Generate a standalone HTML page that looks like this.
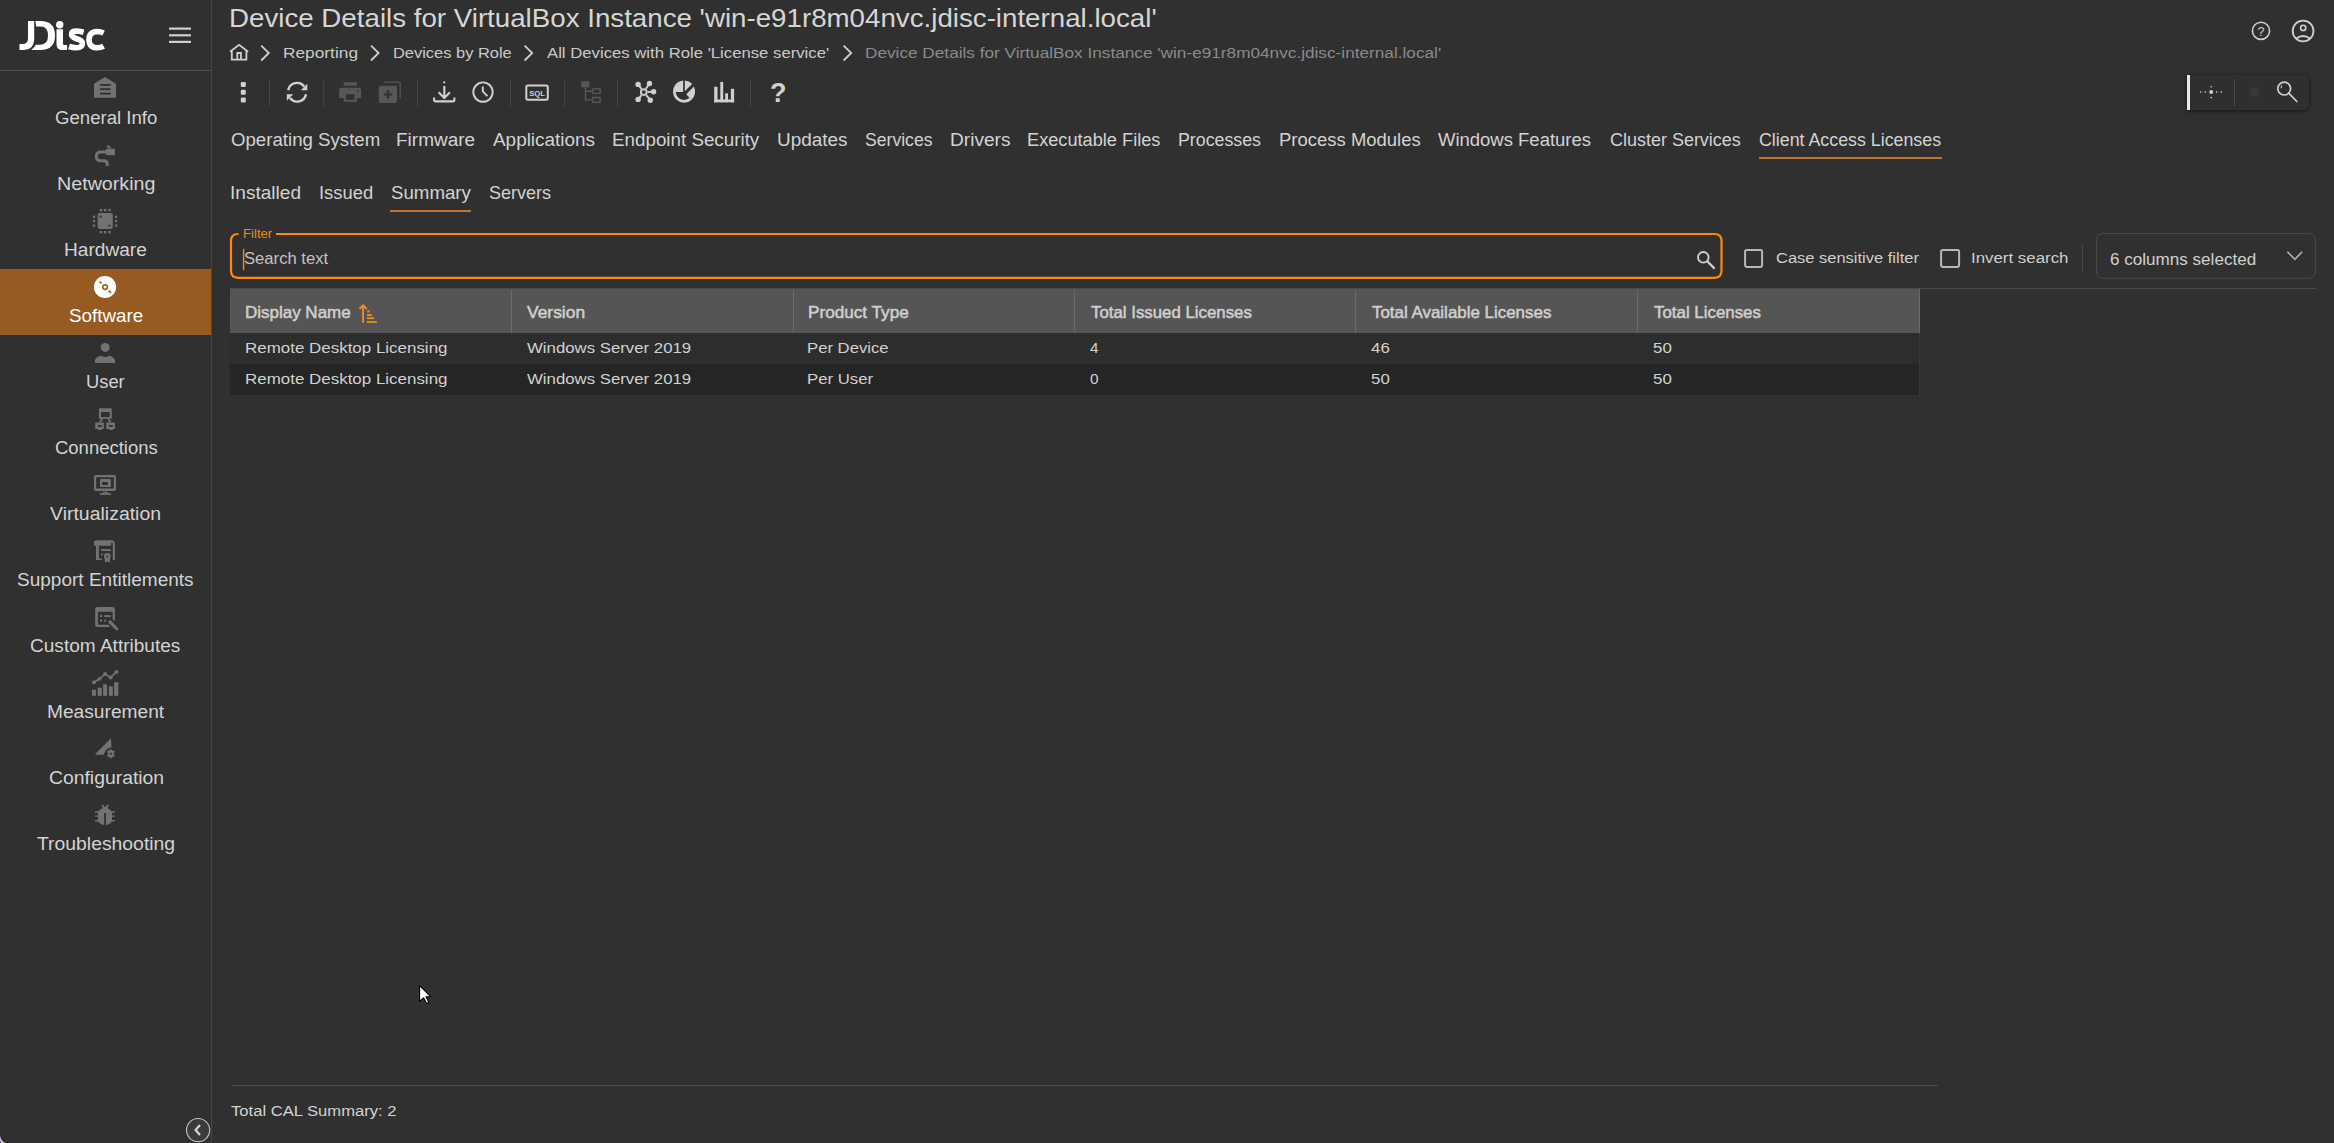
<!DOCTYPE html>
<html><head><meta charset="utf-8">
<style>
*{margin:0;padding:0;box-sizing:border-box}
html,body{width:2334px;height:1143px;overflow:hidden;background:#303030;font-family:"Liberation Sans",sans-serif}
.t{position:absolute;white-space:nowrap}
.b{position:absolute}
svg{position:absolute;overflow:visible}
</style></head><body>
<!-- sidebar -->
<div class="b" style="left:211px;top:0;width:1px;height:1143px;background:#464646"></div>
<div class="b" style="left:0;top:70px;width:211px;height:1px;background:#4e4e4e"></div>
<div class="b" style="left:0;top:269px;width:211px;height:66px;background:#975a21"></div>
<!-- logo + hamburger -->
<svg style="left:0;top:0" width="211" height="70" viewBox="0 0 211 70">
 <g fill="#ffffff">
  <path d="M28 21 H34.2 V38.5 Q34.2 50 22.5 50 H19.5 V44 H22 Q28 44 28 38.5 Z"/>
  <path d="M35.4 21 H40.5 Q55 21 55 35.5 Q55 50 40.5 50 H31.2 Q34.6 47.5 35.8 44.7 H40.5 Q48 44.7 48 35.5 Q48 26.4 40.5 26.4 H36.2 Z"/>
  <circle cx="59.7" cy="24.7" r="3.7"/>
  <path d="M56.5 29.2 H63 V43.5 Q63 45 64.5 45 H67.1 V50 H62.5 Q56.5 50 56.5 44 Z"/>
 </g>
 <g fill="none" stroke="#ffffff" stroke-width="5.6">
  <path d="M83.6 32.2 Q79 31 75.5 31 Q71.5 31.3 71.6 34.5 Q71.8 37 76 38.5 L79.5 39.8 Q82.6 41.2 82.4 44 Q82 47.6 76.5 47.7 Q72.5 47.7 69 46.5"/>
  <path d="M103.6 33 Q100.5 31.5 97.5 31.5 Q89 31.7 89 39.8 Q89 47.8 97.5 47.8 Q100.8 47.8 103.6 46.3"/>
 </g>
 <g fill="#cfcfcf">
  <rect x="169" y="27.5" width="22" height="2.2"/>
  <rect x="169" y="34.2" width="22" height="2.2"/>
  <rect x="169" y="40.8" width="22" height="2.2"/>
 </g>
</svg>
<!-- sidebar icons -->
<svg style="left:85px;top:0" width="40" height="900" viewBox="0 0 40 900">
 <g fill="#727272">
  <!-- general info y0=72 -->
  <g transform="translate(0,72)">
   <path d="M9.3 11.5 L20 4.9 L30.7 11.5 Q31 12 31 13 V24.3 Q31 25.8 29.5 25.8 H10.5 Q9 25.8 9 24.3 V13 Q9 12 9.3 11.5 Z"/>
   <g fill="#303030"><rect x="15.1" y="12.1" width="10.6" height="1.8"/><rect x="15.1" y="16.3" width="10.6" height="1.8"/><rect x="15.1" y="20.7" width="10.6" height="1.9"/></g>
  </g>
  <!-- networking y0=140 -->
  <g transform="translate(0,140)">
   <rect x="21.1" y="8.7" width="8.8" height="6.4"/>
   <path d="M22.8 5 L26.2 7.6 L24.6 9 L21.5 6.5 Z"/>
   <path d="M22 12 H16 Q11.3 12 11.3 16.4 Q11.3 20.7 16 20.7 H18.5 Q22.3 20.7 22.3 24 V25.9" fill="none" stroke="#727272" stroke-width="3"/>
  </g>
  <!-- hardware y0=205 -->
  <g transform="translate(0,205)">
   <rect x="12.6" y="8.1" width="15.2" height="15.8" rx="2.2"/>
   <g fill="#303030"><circle cx="15.7" cy="11.7" r="1.1"/><circle cx="24.5" cy="20.6" r="1.1"/></g>
   <rect x="14.7" y="3.9" width="2.4" height="2.4"/><rect x="18.9" y="3.9" width="2.4" height="2.4"/><rect x="23.3" y="3.9" width="2.4" height="2.4"/>
   <rect x="14.7" y="26" width="2.4" height="2.4"/><rect x="18.9" y="26" width="2.4" height="2.4"/><rect x="23.3" y="26" width="2.4" height="2.4"/>
   <rect x="7.9" y="10.6" width="2.3" height="2.4"/><rect x="7.9" y="14.9" width="2.3" height="2.4"/><rect x="7.9" y="19.4" width="2.3" height="2.4"/>
   <rect x="29.9" y="10.6" width="2.3" height="2.4"/><rect x="29.9" y="14.9" width="2.3" height="2.4"/><rect x="29.9" y="19.4" width="2.3" height="2.4"/>
  </g>
  <!-- software y0=272 -->
  <g transform="translate(0,272)">
   <circle cx="20" cy="15" r="11.1" fill="#ffffff"/>
   <circle cx="20.1" cy="15.1" r="2.3" fill="none" stroke="#975a21" stroke-width="1.6"/>
   <path d="M14.5 9.5 L16.5 11.3 M23.6 18.6 L26.2 21" stroke="#975a21" stroke-width="1.6"/>
  </g>
  <!-- user y0=338 -->
  <g transform="translate(0,338)">
   <circle cx="20.2" cy="9.4" r="4.5"/>
   <path d="M10 25 V22.5 Q10 19.3 16.3 17.8 Q20 20.3 23.7 17.8 Q30 19.3 30 22.5 V25 Z"/>
  </g>
  <!-- connections y0=404 -->
  <g transform="translate(0,404)">
   <path fill-rule="evenodd" d="M13.9 5.5 Q13.9 4.2 15.2 4.2 H25.5 Q26.8 4.2 26.8 5.5 V14.7 H13.9 Z M16 7.9 V12.9 H24.7 V7.9 Z"/>
   <path fill-rule="evenodd" d="M10.2 18.4 H18.8 V24.9 H10.2 Z M12.9 21 V22.8 H16.8 V21 Z"/>
   <rect x="13.1" y="24.9" width="3.7" height="1.1"/>
   <path fill-rule="evenodd" d="M21.3 18.4 H29.9 V24.9 H21.3 Z M23.9 21 V22.8 H27.8 V21 Z"/>
   <rect x="24.1" y="24.9" width="3.7" height="1.1"/>
   <path d="M17.2 14.5 L14.9 18.6 M23.3 14.5 L25.5 18.6" stroke="#727272" stroke-width="1.9"/>
  </g>
  <!-- virtualization y0=470 -->
  <g transform="translate(0,470)">
   <path fill-rule="evenodd" d="M9 7 Q9 5 11 5 H29 Q31 5 31 7 V19 Q31 20.9 29 20.9 H11 Q9 20.9 9 19 Z M11.2 7.3 V18.6 H28.8 V7.3 Z"/>
   <path fill-rule="evenodd" d="M15 10 Q15 8.9 16.2 8.9 H24.8 Q25.9 8.9 25.9 10 V17.1 H15 Z M17.1 12.1 V15 H22.8 V12.1 Z"/>
   <rect x="18.1" y="21.8" width="4.7" height="1.3"/>
   <rect x="14.8" y="23.1" width="11.1" height="1.8"/>
  </g>
  <!-- support y0=536 -->
  <g transform="translate(0,536)">
   <path d="M8.9 9.7 V6.5 Q8.9 4.2 11.5 4.2 H26 Q29.9 4.2 29.9 8 V23.9 H27.8 V8 Q27.8 6.6 26.2 6.6 V9.7 Z"/>
   <path d="M11 9.7 H13.9 V22.6 H16.8 V23.9 H11 Z"/>
   <rect x="16" y="13.1" width="9.9" height="1.9"/>
   <rect x="16" y="17.6" width="1.8" height="1.8"/>
   <circle cx="22.3" cy="20.4" r="3.3"/>
   <path d="M19.9 22 L19.9 26.8 L22.3 25.6 L24.9 26.8 L24.9 22 Z"/>
   <circle cx="22.3" cy="20.4" r="1" fill="#303030"/>
  </g>
  <!-- custom attributes y0=602 -->
  <g transform="translate(0,602)">
   <path d="M10.2 7.5 Q10.2 5 12.7 5 H27.4 Q29.9 5 29.9 7.5 V18.9 L27.6 17.2 V9.7 H12.9 V22.8 H23.5 L25 24.9 H12.7 Q10.2 24.9 10.2 22.4 Z"/>
   <rect x="15" y="13.1" width="2.1" height="1.9"/><rect x="19.2" y="13.1" width="6.7" height="1.9"/>
   <rect x="15" y="17.6" width="2.1" height="2.1"/><rect x="19.2" y="17.6" width="1.8" height="2.1"/>
   <path d="M25 20 L29.6 24.6" stroke="#727272" stroke-width="3.2" stroke-linecap="round"/>
   <path d="M30.3 25.5 L32 27.2" stroke="#727272" stroke-width="2.6" stroke-linecap="round"/>
  </g>
  <!-- measurement y0=668 -->
  <g transform="translate(0,668)">
   <rect x="7" y="21.8" width="3.9" height="6"/><rect x="12.7" y="19.7" width="4.1" height="8.1"/>
   <rect x="18.1" y="16.3" width="3.9" height="11.5"/><rect x="23.9" y="18.4" width="3.9" height="9.4"/>
   <rect x="29.1" y="14.2" width="4.2" height="13.6"/>
   <path d="M9 14.2 L14.6 10.8 L20.1 6 L25.6 9.4 L31.4 3.9" fill="none" stroke="#727272" stroke-width="1.7"/>
   <circle cx="9" cy="14.2" r="2"/><circle cx="14.6" cy="10.8" r="1.9"/><circle cx="20.1" cy="6" r="2"/><circle cx="25.6" cy="9.4" r="2"/><circle cx="31.4" cy="3.9" r="2"/>
  </g>
  <!-- configuration y0=734 -->
  <g transform="translate(0,734)">
   <path d="M10.2 19.9 L26 4.2 L26.5 13.3 Q20.5 14 18.9 20.8 L11 20.8 Z"/>
   <g transform="translate(25.9,19.7)">
    <path d="M-1 -4.3 H1 L1.4 -2.9 L2.9 -3.5 L3.9 -1.8 L2.8 -0.8 L2.8 0.8 L3.9 1.8 L2.9 3.5 L1.4 2.9 L1 4.3 H-1 L-1.4 2.9 L-2.9 3.5 L-3.9 1.8 L-2.8 0.8 L-2.8 -0.8 L-3.9 -1.8 L-2.9 -3.5 L-1.4 -2.9 Z"/>
    <circle r="1.1" fill="#303030"/>
   </g>
  </g>
  <!-- troubleshooting y0=800 -->
  <g transform="translate(0,800)">
   <path d="M17.3 4.3 L20 7.2 L22.9 4.3 L23.8 5.2 L22.3 8.2 Q25.3 9.3 26.3 11.3 H29.9 V12.7 H27 V15.4 H29.9 V16.8 H27 V20 H29.9 V21.4 H26.8 Q25.5 24.3 21 24.9 V12.9 H19.2 V24.9 Q14.6 24.3 13.3 21.4 H10 V20 H13 V16.8 H10 V15.4 H13 V12.7 H10 V11.3 H13.6 Q14.7 9.3 17.8 8.2 L16.4 5.2 Z"/>
  </g>
 </g>
</svg>

<!-- breadcrumb icons -->
<svg style="left:0;top:0" width="900" height="70" viewBox="0 0 900 70">
 <g fill="none" stroke="#cfcfcf" stroke-width="1.8">
  <path d="M230 51.8 L239.1 44.8 L248.1 51.8 M231.8 50.3 V59.6 H246.4 V50.3 M237.3 59.6 V53 H241 V59.6"/>
  <path d="M261.2 45.6 L268.8 53 L261.2 60.5 M371 45.6 L378.6 53 L371 60.5 M524.6 45.6 L532.2 53 L524.6 60.5 M843.6 45.6 L851.2 53 L843.6 60.5"/>
 </g>
</svg>

<!-- toolbar -->
<svg style="left:0;top:0" width="800" height="120" viewBox="0 0 800 120">
 <g fill="#464646">
  <rect x="269" y="79" width="1" height="27"/><rect x="323.2" y="79" width="1" height="27"/><rect x="417" y="79" width="1" height="27"/>
  <rect x="510" y="79" width="1" height="27"/><rect x="564.2" y="79" width="1" height="27"/><rect x="617" y="79" width="1" height="27"/>
  <rect x="750" y="79" width="1" height="27"/>
 </g>
 <g fill="#d0d0d0">
  <rect x="240.8" y="81.9" width="5" height="5" rx="1.2"/><rect x="240.8" y="89.7" width="5" height="5" rx="1.2"/><rect x="240.8" y="97.5" width="5" height="5" rx="1.2"/>
 </g>
 <!-- refresh -->
 <g fill="none" stroke="#d0d0d0" stroke-width="2.4">
  <path d="M288.2 90.2 A9 9 0 0 1 304.2 86.5"/>
  <path d="M306 94.2 A9 9 0 0 1 290 98"/>
 </g>
 <g fill="#d0d0d0">
  <path d="M307.3 83.7 L307.3 90.3 L300.8 90.3 Z"/>
  <path d="M286.8 100.8 L286.8 94.2 L293.2 94.2 Z"/>
 </g>
 <!-- printer dim -->
 <g fill="#575757">
  <rect x="343.7" y="82.3" width="13.2" height="3.4"/>
  <path d="M339.1 90.2 Q339.1 87.7 341.6 87.7 H358.6 Q361.1 87.7 361.1 90.2 V97.9 H356.9 V101.8 H343.7 V97.9 H339.1 Z"/>
  <rect x="346" y="94.3" width="8.5" height="5.5" fill="#303030"/>
  <circle cx="358" cy="90.8" r="0.9" fill="#303030"/>
 </g>
 <!-- copy add dim -->
 <g fill="#575757">
  <path d="M383.8 81.6 H399.3 Q400.8 81.6 400.8 83.1 V98.9 H399.6 V82.8 H383.8 Z"/>
  <rect x="378.8" y="85.8" width="18.2" height="17.3" rx="2"/>
  <path d="M386.8 90.3 H389.2 V93.4 H392.3 V95.6 H389.2 V98.6 H386.8 V95.6 H383.8 V93.4 H386.8 Z" fill="#303030"/>
 </g>
 <!-- download -->
 <g fill="none" stroke="#d0d0d0" stroke-width="2.1">
  <path d="M444.3 86 V97.5 M438.6 92.3 L444.3 98 L450 92.3"/>
  <path d="M434.1 97.6 V100.3 Q434.1 101.4 435.2 101.4 H453.3 Q454.4 101.4 454.4 100.3 V97.6"/>
 </g>
 <rect x="443.2" y="81.3" width="2.2" height="2.2" rx="1" fill="#d0d0d0"/>
 <!-- clock -->
 <g fill="none" stroke="#d0d0d0" stroke-width="1.9">
  <circle cx="483" cy="92.1" r="9.7"/>
  <path d="M482.8 86.5 V91.4 L487.4 96.2"/>
 </g>
 <!-- SQL -->
 <rect x="526.3" y="85.4" width="21.5" height="14.3" rx="1.6" fill="none" stroke="#d0d0d0" stroke-width="2"/>
 <text x="537" y="95.6" font-family="Liberation Sans" font-weight="700" font-size="7.6" fill="#d0d0d0" text-anchor="middle">SQL</text>
 <!-- tree dim -->
 <g fill="#575757">
  <rect x="581.4" y="81.4" width="8.1" height="6"/>
 </g>
 <g fill="none" stroke="#575757" stroke-width="1.4">
  <path d="M585.5 87.4 V99.9 H592.3 M585.5 91.2 H592.3"/>
  <rect x="592.8" y="88.9" width="7.3" height="4.5"/>
  <rect x="592.8" y="97.5" width="7.3" height="4.8"/>
 </g>
 <!-- hub -->
 <g stroke="#d0d0d0" stroke-width="1.9" fill="none">
  <path d="M643.8 92.1 L638.1 84.4 M643.8 92.1 L649.5 83.5 M643.8 92.1 L653.6 91.7 M643.8 92.1 L638.1 99.4 M643.8 92.1 L650.3 100.2"/>
 </g>
 <circle cx="643.8" cy="92.1" r="3.9" fill="#303030"/>
 <circle cx="643.8" cy="92.1" r="2.9" fill="none" stroke="#d0d0d0" stroke-width="1.9"/>
 <g fill="#d0d0d0">
  <circle cx="638.1" cy="84.4" r="2.7"/><circle cx="649.5" cy="83.5" r="2.7"/><circle cx="653.6" cy="91.7" r="2.7"/><circle cx="638.1" cy="99.4" r="2.7"/><circle cx="650.3" cy="100.2" r="2.7"/>
 </g>
 <!-- pie -->
 <g fill="#d0d0d0">
  <path d="M683.1 92.1 H673.0 A11.1 11.1 0 0 1 683.1 80.45 Z"/>
  <path d="M684.8 91.3 V80.42 A11.1 11.1 0 0 1 692.2 83.9 Z"/>
  <path d="M693.9 86.6 L686.2 94.2 L690.1 98.4 L691.4 99.9 A11.1 11.1 0 0 0 693.9 86.6 Z"/>
  <path d="M673.0 92.1 A11.1 11.1 0 0 0 691.4 99.9 L689.6 97.8 A8.4 8.4 0 0 1 675.7 92.1 Z"/>
 </g>
 <!-- bar chart -->
 <g fill="#d0d0d0">
  <rect x="714.2" y="86.8" width="3.3" height="15.5"/><rect x="720.3" y="81.9" width="2.9" height="20.4"/>
  <rect x="725.2" y="93.3" width="2.8" height="9"/><rect x="730.9" y="88.8" width="3.2" height="13.5"/>
  <rect x="714.2" y="99.5" width="19.9" height="2.8"/>
 </g>
 <!-- question -->
 <text x="778.2" y="102.4" font-family="Liberation Sans" font-weight="700" font-size="27" fill="#d0d0d0" text-anchor="middle">?</text>
</svg>

<!-- right top icons -->
<svg style="left:2200px;top:0" width="134" height="130" viewBox="2200 0 134 130">
 <g fill="none" stroke="#d0d0d0">
  <circle cx="2261" cy="30.8" r="8.6" stroke-width="1.6"/>
  <circle cx="2303.1" cy="31" r="10.4" stroke-width="1.8"/>
  <circle cx="2303.2" cy="27.9" r="2.6" stroke-width="1.6"/>
  <path d="M2296.3 38.4 Q2303 33.6 2310 38.4" stroke-width="1.8"/>
 </g>
 <text x="2261.1" y="35.6" font-family="Liberation Sans" font-size="12.5" fill="#d0d0d0" text-anchor="middle">?</text>
</svg>
<!-- floating toolbar -->
<div class="b" style="left:2187px;top:74.5px;width:122px;height:35.5px;background:#2f2f2f;border-radius:0 6px 6px 0;box-shadow:0 1px 4px rgba(0,0,0,0.55)"></div>
<div class="b" style="left:2187px;top:75px;width:3px;height:35px;background:#e8e8e8"></div>
<div class="b" style="left:2234px;top:79px;width:1px;height:27px;background:#4a4a4a"></div>
<svg style="left:2190px;top:70px" width="120" height="45" viewBox="2190 70 120 45">
 <g fill="#cfcfcf">
  <circle cx="2211.2" cy="92.1" r="2"/>
  <circle cx="2200.8" cy="92.1" r="0.8"/><circle cx="2205.3" cy="92.1" r="0.8"/><circle cx="2216.7" cy="92.1" r="0.8"/><circle cx="2221.3" cy="92.1" r="0.8"/>
  <circle cx="2211.2" cy="86.7" r="0.8"/><circle cx="2211.2" cy="97.6" r="0.8"/>
 </g>
 <circle cx="2254" cy="92" r="5" fill="#383838"/>
 <g fill="none" stroke="#d0d0d0" stroke-width="1.7">
  <circle cx="2284.2" cy="88.6" r="6.4"/>
  <path d="M2288.8 93.2 L2296.8 101.5" stroke-linecap="round"/>
  <path d="M2282 85.6 Q2281 86.8 2281.2 88.3" stroke-width="1.1"/>
 </g>
</svg>

<!-- filter box -->
<svg style="left:0;top:0" width="2334" height="300" viewBox="0 0 2334 300">
 <path d="M238.5 234 H238 Q231 234 231 241 V270.5 Q231 277.8 238 277.8 H1714.5 Q1721.5 277.8 1721.5 270.5 V241 Q1721.5 234 1714.5 234 H276" fill="none" stroke="#ff8a0a" stroke-width="2.2"/>
 <rect x="242.9" y="248.8" width="1.4" height="21.3" fill="#ff8a0a"/>
 <g fill="none" stroke="#d0d0d0" stroke-width="1.8">
  <circle cx="1703.3" cy="257.3" r="5.3"/>
  <path d="M1707.2 261.2 L1714.6 268.6" stroke-width="2.2"/>
 </g>
 <!-- checkboxes -->
 <rect x="1745.1" y="250" width="17" height="16.9" rx="1.8" fill="none" stroke="#b8b8b8" stroke-width="2"/>
 <rect x="1941.1" y="250" width="18" height="16.9" rx="1.8" fill="none" stroke="#b8b8b8" stroke-width="2"/>
 <rect x="2082" y="245" width="1" height="27" fill="#474747"/>
 <!-- dropdown -->
 <rect x="2096.6" y="233.6" width="218.7" height="44.7" rx="6" fill="none" stroke="#4b4b4b" stroke-width="1"/>
 <path d="M2287.4 251.8 L2294.8 259.3 L2302.2 251.8" fill="none" stroke="#b0b0b0" stroke-width="1.6"/>
 <rect x="230" y="288" width="2086" height="1" fill="#4a4a4a"/>
</svg>

<!-- table -->
<div class="b" style="left:230px;top:289px;width:1690px;height:44px;background:#555555"></div>
<svg style="left:230px;top:333px" width="1690" height="62" viewBox="0 0 1690 62">
 <defs>
  <pattern id="dA" x="0" y="0" width="4" height="4" patternUnits="userSpaceOnUse"><rect width="4" height="4" fill="#2c2c2c"/><rect x="1" y="1" width="1" height="1" fill="#363636"/><rect x="3" y="3" width="1" height="1" fill="#363636"/></pattern>
  <pattern id="dB" x="0" y="0" width="4" height="4" patternUnits="userSpaceOnUse"><rect width="4" height="4" fill="#242424"/><rect x="1" y="1" width="1" height="1" fill="#2e2e2e"/><rect x="3" y="3" width="1" height="1" fill="#2e2e2e"/></pattern>
 </defs>
 <rect x="0" y="0" width="1690" height="31" fill="url(#dA)"/>
 <rect x="0" y="31" width="1690" height="31" fill="url(#dB)"/>
</svg>
<div class="b" style="left:1919px;top:289px;width:1px;height:44px;background:#6a6a6a"></div>
<div class="b" style="left:1919px;top:333px;width:1px;height:62px;background:#383838"></div>
<div class="b" style="left:511px;top:290px;width:1px;height:43px;background:#6a6a6a"></div>
<div class="b" style="left:793px;top:290px;width:1px;height:43px;background:#6a6a6a"></div>
<div class="b" style="left:1074px;top:290px;width:1px;height:43px;background:#6a6a6a"></div>
<div class="b" style="left:1355px;top:290px;width:1px;height:43px;background:#6a6a6a"></div>
<div class="b" style="left:1637px;top:290px;width:1px;height:43px;background:#6a6a6a"></div>
<svg style="left:355px;top:300px" width="30" height="30" viewBox="355 300 30 30">
 <g fill="#f28a1e">
  <rect x="362.1" y="306" width="1.9" height="16.7"/>
  <rect x="367.3" y="310.3" width="2.3" height="2.2"/>
  <rect x="367.1" y="314.1" width="4.7" height="1.9"/>
  <rect x="367" y="317.3" width="7" height="1.8"/>
  <rect x="367" y="321.1" width="9.8" height="1.8"/>
 </g>
 <path d="M359.4 309 L363.05 305.4 L366.7 309" fill="none" stroke="#f28a1e" stroke-width="2"/>
</svg>

<!-- tab underlines -->
<div class="b" style="left:1759px;top:156.5px;width:183px;height:2px;background:#c0762c"></div>
<div class="b" style="left:390.4px;top:210px;width:80.6px;height:2.3px;background:#c0762c"></div>
<!-- footer -->
<div class="b" style="left:231px;top:1085px;width:1707px;height:1px;background:#4c4c4c"></div>
<svg style="left:180px;top:1110px" width="40" height="33" viewBox="180 1110 40 33">
 <circle cx="198.1" cy="1130.1" r="11.6" fill="#3b3b3b" stroke="#bdbdbd" stroke-width="1.2"/>
 <path d="M200 1125 L195.6 1130 L200 1135" fill="none" stroke="#d6d6d6" stroke-width="2.2"/>
</svg>
<!-- cursor -->
<svg style="left:410px;top:978px" width="30" height="30" viewBox="410 978 30 30">
 <path d="M419.6 985.6 V1001.4 L423.6 997.8 L426.6 1003.4 L428.8 1002.3 L426 996.8 H431 Z" fill="#ffffff" stroke="#000000" stroke-width="1.1" stroke-linejoin="round"/>
</svg>
<svg style="left:0;top:1130px" width="10" height="13" viewBox="0 1130 10 13">
 <path d="M0 1135.6 Q0.8 1141.2 5.2 1143 H0 Z" fill="#cfcfcf"/>
 <rect x="0" y="1141.6" width="1" height="1.4" fill="#2050a0"/>
</svg>
<div class="t" style="left:54.50px;top:109.16px;font-size:18px;line-height:18px;color:#d3d3d3;letter-spacing:0.000px;transform:scaleX(1.0328);transform-origin:0 0">General Info</div>
<div class="t" style="left:56.61px;top:175.16px;font-size:18px;line-height:18px;color:#d3d3d3;letter-spacing:0.000px;transform:scaleX(1.0940);transform-origin:0 0">Networking</div>
<div class="t" style="left:63.74px;top:241.16px;font-size:18px;line-height:18px;color:#d3d3d3;letter-spacing:0.000px;transform:scaleX(1.0608);transform-origin:0 0">Hardware</div>
<div class="t" style="left:68.60px;top:307.16px;font-size:18px;line-height:18px;color:#ffffff;letter-spacing:0.000px;transform:scaleX(1.0433);transform-origin:0 0">Software</div>
<div class="t" style="left:85.78px;top:373.16px;font-size:18px;line-height:18px;color:#d3d3d3;letter-spacing:0.000px;transform:scaleX(1.0187);transform-origin:0 0">User</div>
<div class="t" style="left:54.60px;top:439.16px;font-size:18px;line-height:18px;color:#d3d3d3;letter-spacing:0.000px;transform:scaleX(1.0263);transform-origin:0 0">Connections</div>
<div class="t" style="left:50.40px;top:505.16px;font-size:18px;line-height:18px;color:#d3d3d3;letter-spacing:0.000px;transform:scaleX(1.0814);transform-origin:0 0">Virtualization</div>
<div class="t" style="left:17.40px;top:571.16px;font-size:18px;line-height:18px;color:#d3d3d3;letter-spacing:0.000px;transform:scaleX(1.0569);transform-origin:0 0">Support Entitlements</div>
<div class="t" style="left:29.80px;top:637.16px;font-size:18px;line-height:18px;color:#d3d3d3;letter-spacing:0.000px;transform:scaleX(1.0584);transform-origin:0 0">Custom Attributes</div>
<div class="t" style="left:46.94px;top:703.16px;font-size:18px;line-height:18px;color:#d3d3d3;letter-spacing:0.000px;transform:scaleX(1.0647);transform-origin:0 0">Measurement</div>
<div class="t" style="left:48.80px;top:769.16px;font-size:18px;line-height:18px;color:#d3d3d3;letter-spacing:0.000px;transform:scaleX(1.0749);transform-origin:0 0">Configuration</div>
<div class="t" style="left:37.20px;top:835.16px;font-size:18px;line-height:18px;color:#d3d3d3;letter-spacing:0.000px;transform:scaleX(1.0753);transform-origin:0 0">Troubleshooting</div>
<div class="t" style="left:229.37px;top:4.99px;font-size:26px;line-height:26px;color:#d6d6d6;letter-spacing:0.000px;transform:scaleX(1.0654);transform-origin:0 0">Device Details for VirtualBox Instance &#x27;win-e91r8m04nvc.jdisc-internal.local&#x27;</div>
<div class="t" style="left:282.98px;top:45.18px;font-size:15.5px;line-height:15.5px;color:#cacaca;letter-spacing:0.000px;transform:scaleX(1.1161);transform-origin:0 0">Reporting</div>
<div class="t" style="left:392.74px;top:45.18px;font-size:15.5px;line-height:15.5px;color:#cacaca;letter-spacing:0.000px;transform:scaleX(1.0601);transform-origin:0 0">Devices by Role</div>
<div class="t" style="left:547.00px;top:45.18px;font-size:15.5px;line-height:15.5px;color:#cacaca;letter-spacing:0.000px;transform:scaleX(1.0779);transform-origin:0 0">All Devices with Role &#x27;License service&#x27;</div>
<div class="t" style="left:864.99px;top:45.18px;font-size:15.5px;line-height:15.5px;color:#8a8a8a;letter-spacing:0.000px;transform:scaleX(1.1100);transform-origin:0 0">Device Details for VirtualBox Instance &#x27;win-e91r8m04nvc.jdisc-internal.local&#x27;</div>
<div class="t" style="left:230.50px;top:130.96px;font-size:18px;line-height:18px;color:#d3d3d3;letter-spacing:0.000px;transform:scaleX(1.0359);transform-origin:0 0">Operating System</div>
<div class="t" style="left:396.15px;top:130.96px;font-size:18px;line-height:18px;color:#d3d3d3;letter-spacing:0.000px;transform:scaleX(1.0542);transform-origin:0 0">Firmware</div>
<div class="t" style="left:493.20px;top:130.96px;font-size:18px;line-height:18px;color:#d3d3d3;letter-spacing:0.000px;transform:scaleX(1.0509);transform-origin:0 0">Applications</div>
<div class="t" style="left:612.46px;top:130.96px;font-size:18px;line-height:18px;color:#d3d3d3;letter-spacing:0.000px;transform:scaleX(1.0437);transform-origin:0 0">Endpoint Security</div>
<div class="t" style="left:776.95px;top:130.96px;font-size:18px;line-height:18px;color:#d3d3d3;letter-spacing:0.000px;transform:scaleX(1.0508);transform-origin:0 0">Updates</div>
<div class="t" style="left:865.30px;top:130.96px;font-size:18px;line-height:18px;color:#d3d3d3;letter-spacing:0.000px;transform:scaleX(0.9780);transform-origin:0 0">Services</div>
<div class="t" style="left:949.84px;top:130.96px;font-size:18px;line-height:18px;color:#d3d3d3;letter-spacing:0.000px;transform:scaleX(1.0608);transform-origin:0 0">Drivers</div>
<div class="t" style="left:1026.99px;top:130.96px;font-size:18px;line-height:18px;color:#d3d3d3;letter-spacing:0.000px;transform:scaleX(1.0102);transform-origin:0 0">Executable Files</div>
<div class="t" style="left:1178.01px;top:130.96px;font-size:18px;line-height:18px;color:#d3d3d3;letter-spacing:0.000px;transform:scaleX(0.9876);transform-origin:0 0">Processes</div>
<div class="t" style="left:1278.67px;top:130.96px;font-size:18px;line-height:18px;color:#d3d3d3;letter-spacing:0.000px;transform:scaleX(1.0266);transform-origin:0 0">Process Modules</div>
<div class="t" style="left:1438.00px;top:130.96px;font-size:18px;line-height:18px;color:#d3d3d3;letter-spacing:0.000px;transform:scaleX(1.0265);transform-origin:0 0">Windows Features</div>
<div class="t" style="left:1609.60px;top:130.96px;font-size:18px;line-height:18px;color:#d3d3d3;letter-spacing:0.000px;transform:scaleX(0.9982);transform-origin:0 0">Cluster Services</div>
<div class="t" style="left:1759.00px;top:130.96px;font-size:18px;line-height:18px;color:#d3d3d3;letter-spacing:0.000px;transform:scaleX(0.9888);transform-origin:0 0">Client Access Licenses</div>
<div class="t" style="left:230.20px;top:183.12px;font-size:19px;line-height:19px;color:#d3d3d3;letter-spacing:0.000px;transform:scaleX(1.0029);transform-origin:0 0">Installed</div>
<div class="t" style="left:319.03px;top:183.12px;font-size:19px;line-height:19px;color:#d3d3d3;letter-spacing:0.000px;transform:scaleX(0.9667);transform-origin:0 0">Issued</div>
<div class="t" style="left:390.60px;top:183.12px;font-size:19px;line-height:19px;color:#d3d3d3;letter-spacing:0.000px;transform:scaleX(0.9830);transform-origin:0 0">Summary</div>
<div class="t" style="left:488.60px;top:183.12px;font-size:19px;line-height:19px;color:#d3d3d3;letter-spacing:0.000px;transform:scaleX(0.9483);transform-origin:0 0">Servers</div>
<div class="t" style="left:242.95px;top:228.02px;font-size:12.5px;line-height:12.5px;color:#ea8a1e;letter-spacing:0.000px;transform:scaleX(1.0521);transform-origin:0 0">Filter</div>
<div class="t" style="left:244.20px;top:250.89px;font-size:15.6px;line-height:15.6px;color:#c2c2c2;letter-spacing:0.000px;transform:scaleX(1.0674);transform-origin:0 0">Search text</div>
<div class="t" style="left:1776.00px;top:249.98px;font-size:15.5px;line-height:15.5px;color:#cfcfcf;letter-spacing:0.000px;transform:scaleX(1.0632);transform-origin:0 0">Case sensitive filter</div>
<div class="t" style="left:1971.31px;top:249.88px;font-size:15.5px;line-height:15.5px;color:#cfcfcf;letter-spacing:0.000px;transform:scaleX(1.0878);transform-origin:0 0">Invert search</div>
<div class="t" style="left:2110.20px;top:251.66px;font-size:16px;line-height:16px;color:#d0d0d0;letter-spacing:0.000px;transform:scaleX(1.0672);transform-origin:0 0">6 columns selected</div>
<div class="t" style="left:244.55px;top:304.19px;font-size:16.2px;line-height:16.2px;color:#cfcfcf;letter-spacing:0.000px;transform:scaleX(1.0486);transform-origin:0 0;-webkit-text-stroke:0.5px #cfcfcf">Display Name</div>
<div class="t" style="left:527.27px;top:304.19px;font-size:16.2px;line-height:16.2px;color:#cfcfcf;letter-spacing:0.000px;transform:scaleX(1.0757);transform-origin:0 0;-webkit-text-stroke:0.5px #cfcfcf">Version</div>
<div class="t" style="left:807.87px;top:304.19px;font-size:16.2px;line-height:16.2px;color:#cfcfcf;letter-spacing:0.000px;transform:scaleX(1.0596);transform-origin:0 0;-webkit-text-stroke:0.5px #cfcfcf">Product Type</div>
<div class="t" style="left:1090.60px;top:304.19px;font-size:16.2px;line-height:16.2px;color:#cfcfcf;letter-spacing:0.000px;transform:scaleX(1.0396);transform-origin:0 0;-webkit-text-stroke:0.5px #cfcfcf">Total Issued Licenses</div>
<div class="t" style="left:1372.27px;top:304.19px;font-size:16.2px;line-height:16.2px;color:#cfcfcf;letter-spacing:0.000px;transform:scaleX(1.0454);transform-origin:0 0;-webkit-text-stroke:0.5px #cfcfcf">Total Available Licenses</div>
<div class="t" style="left:1653.93px;top:304.19px;font-size:16.2px;line-height:16.2px;color:#cfcfcf;letter-spacing:0.000px;transform:scaleX(1.0421);transform-origin:0 0;-webkit-text-stroke:0.5px #cfcfcf">Total Licenses</div>
<div class="t" style="left:244.69px;top:340.15px;font-size:15.3px;line-height:15.3px;color:#d2d2d2;letter-spacing:0.000px;transform:scaleX(1.1076);transform-origin:0 0">Remote Desktop Licensing</div>
<div class="t" style="left:526.60px;top:340.15px;font-size:15.3px;line-height:15.3px;color:#d2d2d2;letter-spacing:0.000px;transform:scaleX(1.0970);transform-origin:0 0">Windows Server 2019</div>
<div class="t" style="left:807.11px;top:340.15px;font-size:15.3px;line-height:15.3px;color:#d2d2d2;letter-spacing:0.000px;transform:scaleX(1.0913);transform-origin:0 0">Per Device</div>
<div class="t" style="left:1089.90px;top:340.15px;font-size:15.3px;line-height:15.3px;color:#d2d2d2;letter-spacing:0.000px">4</div>
<div class="t" style="left:1371.20px;top:340.15px;font-size:15.3px;line-height:15.3px;color:#d2d2d2;letter-spacing:0.000px;transform:scaleX(1.1025);transform-origin:0 0">46</div>
<div class="t" style="left:1652.80px;top:340.15px;font-size:15.3px;line-height:15.3px;color:#d2d2d2;letter-spacing:0.000px;transform:scaleX(1.1025);transform-origin:0 0">50</div>
<div class="t" style="left:244.69px;top:371.05px;font-size:15.3px;line-height:15.3px;color:#d2d2d2;letter-spacing:0.000px;transform:scaleX(1.1076);transform-origin:0 0">Remote Desktop Licensing</div>
<div class="t" style="left:526.60px;top:371.05px;font-size:15.3px;line-height:15.3px;color:#d2d2d2;letter-spacing:0.000px;transform:scaleX(1.0970);transform-origin:0 0">Windows Server 2019</div>
<div class="t" style="left:807.10px;top:371.05px;font-size:15.3px;line-height:15.3px;color:#d2d2d2;letter-spacing:0.000px;transform:scaleX(1.0952);transform-origin:0 0">Per User</div>
<div class="t" style="left:1089.90px;top:371.05px;font-size:15.3px;line-height:15.3px;color:#d2d2d2;letter-spacing:0.000px">0</div>
<div class="t" style="left:1371.20px;top:371.05px;font-size:15.3px;line-height:15.3px;color:#d2d2d2;letter-spacing:0.000px;transform:scaleX(1.1025);transform-origin:0 0">50</div>
<div class="t" style="left:1652.80px;top:371.05px;font-size:15.3px;line-height:15.3px;color:#d2d2d2;letter-spacing:0.000px;transform:scaleX(1.1025);transform-origin:0 0">50</div>
<div class="t" style="left:231.40px;top:1102.95px;font-size:15.3px;line-height:15.3px;color:#d3d3d3;letter-spacing:0.000px;transform:scaleX(1.0858);transform-origin:0 0">Total CAL Summary: 2</div>
</body></html>
